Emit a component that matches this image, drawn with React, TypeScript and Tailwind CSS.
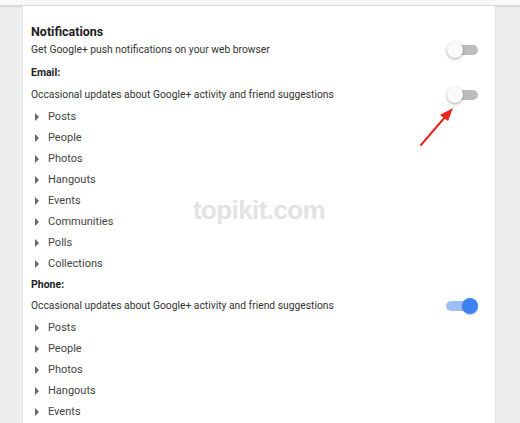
import React from 'react';

const emailItems = ['Posts', 'People', 'Photos', 'Hangouts', 'Events', 'Communities', 'Polls', 'Collections'];
const phoneItems = ['Posts', 'People', 'Photos', 'Hangouts', 'Events'];

const Toggle = ({ on }: { on?: boolean }) => {
  if (on) {
    return (
      <div className="relative h-[16px] w-[32px]">
        <div className="absolute left-0 top-[3px] h-[10px] w-[27px] rounded-full bg-[#9fc0f7]" />
        <div className="absolute right-0 top-0 h-[16px] w-[16px] rounded-full bg-[#3d82f2] shadow-[0_1px_2px_rgba(0,0,0,0.25)]" />
      </div>
    );
  }
  return (
    <div className="relative h-[16px] w-[31px]">
      <div className="absolute right-0 top-[3px] h-[10px] w-[26px] rounded-full bg-[#bdbdbd]" />
      <div className="absolute left-0 top-0 h-[16px] w-[16px] rounded-full bg-[#fafafa] shadow-[0_1px_3px_rgba(0,0,0,0.35)]" />
    </div>
  );
};

const Item = ({ label }: { label: string }) => (
  <div className="flex h-[21px] items-center">
    <span className="relative -top-[1px] ml-[4px] h-0 w-0 border-y-[4px] border-l-[4px] border-y-transparent border-l-[#666]" />
    <span className="ml-[9px] text-[11px] text-[#444]">{label}</span>
  </div>
);

export default function App() {
  return (
    <div className="relative h-[423px] w-[520px] overflow-hidden bg-[#eeeeee] font-['Roboto',sans-serif]">
      <div className="h-[6px] border-b border-[#d8d8d8] bg-[#f8f8f8] shadow-[0_1px_2px_rgba(0,0,0,0.12)]" />
      <div className="ml-[22px] h-full w-[474px] border-l border-r border-[#e2e2e2] bg-white pl-[8px] pr-[17px] pt-[16px]">
        <div className="flex h-[20px] items-center text-[12.5px] font-bold text-[#212121]">Notifications</div>
        <div className="flex h-[16px] items-center justify-between">
          <span className="text-[10.3px] text-[#333]">Get Google+ push notifications on your web browser</span>
          <Toggle />
        </div>
        <div className="mt-[5px] flex h-[20px] items-center text-[10.5px] font-bold text-[#222]">Email:</div>
        <div className="mt-[2px] flex h-[20px] items-center justify-between">
          <span className="text-[10.3px] text-[#333]">Occasional updates about Google+ activity and friend suggestions</span>
          <Toggle />
        </div>
        <div className="mt-[2px]">
          {emailItems.map((i) => (
            <Item key={'e' + i} label={i} />
          ))}
        </div>
        <div className="flex h-[20px] items-center text-[10.5px] font-bold text-[#222]">Phone:</div>
        <div className="flex h-[21px] items-center justify-between">
          <span className="text-[10.3px] text-[#333]">Occasional updates about Google+ activity and friend suggestions</span>
          <Toggle on />
        </div>
        <div className="mt-[2px]">
          {phoneItems.map((i) => (
            <Item key={'p' + i} label={i} />
          ))}
        </div>
      </div>

      {/* watermark */}
      <div className="pointer-events-none absolute left-[193px] top-[191px] text-[26px] font-bold tracking-[-0.6px] text-[#e3e3e3] font-['Liberation_Sans',sans-serif]">
        topikit.com
      </div>

      {/* red arrow annotation */}
      <svg className="pointer-events-none absolute left-0 top-0" width="520" height="423">
        <line x1="421" y1="145" x2="446" y2="116" stroke="#e8241c" strokeWidth="2" strokeLinecap="round" />
        <polygon points="453,108 440,115 448,121" fill="#e8241c" />
      </svg>
    </div>
  );
}
